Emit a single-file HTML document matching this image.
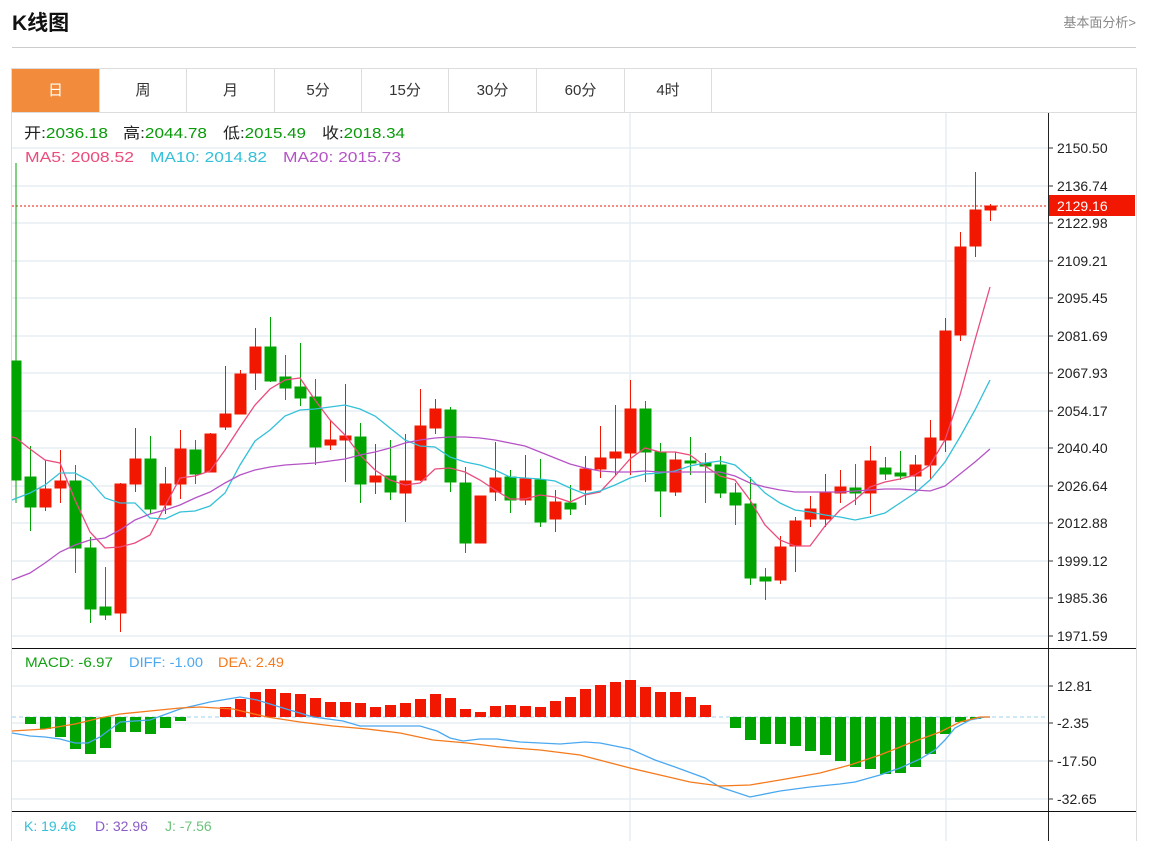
<!DOCTYPE html>
<html style="width:1151px;height:841px;overflow:hidden"><head><meta charset="utf-8"><style>
html,body{margin:0;width:1151px;height:841px;overflow:hidden}
body{background:#fff;font-family:"Liberation Sans","Noto Sans CJK SC",sans-serif;position:relative}
.t{position:absolute;left:12px;top:7px;font-size:21px;font-weight:bold;color:#111}
.r{position:absolute;right:15px;top:12px;font-size:13px;color:#888}
.hr{position:absolute;left:12px;width:1124px;top:47px;height:1px;background:#ccc}
.frame{position:absolute;left:11px;top:68px;width:1124px;height:772px;border:1px solid #ddd;border-bottom:none}
.tab{position:absolute;top:69px;height:43px;line-height:43px;text-align:center;font-size:15px;color:#333;border-right:1px solid #ddd;box-sizing:border-box}
.tab.a{background:#f28c3c;color:#fff}
</style></head><body>
<div class="t">K线图</div>
<div class="r">基本面分析&gt;</div>
<div class="hr"></div>
<div class="frame"></div>
<div class="tab a" style="left:12px;width:88px">日</div>
<div class="tab" style="left:100px;width:87px">周</div>
<div class="tab" style="left:187px;width:88px">月</div>
<div class="tab" style="left:275px;width:87px">5分</div>
<div class="tab" style="left:362px;width:87px">15分</div>
<div class="tab" style="left:449px;width:88px">30分</div>
<div class="tab" style="left:537px;width:88px">60分</div>
<div class="tab" style="left:625px;width:87px">4时</div>
<svg width="1151" height="841" style="position:absolute;left:0;top:0" font-family="Liberation Sans, Noto Sans CJK SC, sans-serif">
<line x1="12" y1="112.5" x2="1136" y2="112.5" stroke="#ddd"/>
<g stroke="#e6edf3" stroke-width="1.5">
<line x1="12" y1="148" x2="1048" y2="148"/><line x1="12" y1="186" x2="1048" y2="186"/><line x1="12" y1="223" x2="1048" y2="223"/><line x1="12" y1="261" x2="1048" y2="261"/><line x1="12" y1="298" x2="1048" y2="298"/><line x1="12" y1="336" x2="1048" y2="336"/><line x1="12" y1="373" x2="1048" y2="373"/><line x1="12" y1="411" x2="1048" y2="411"/><line x1="12" y1="448" x2="1048" y2="448"/><line x1="12" y1="486" x2="1048" y2="486"/><line x1="12" y1="523" x2="1048" y2="523"/><line x1="12" y1="561" x2="1048" y2="561"/><line x1="12" y1="598" x2="1048" y2="598"/><line x1="12" y1="636" x2="1048" y2="636"/>
<line x1="12" y1="686" x2="1048" y2="686"/><line x1="12" y1="723" x2="1048" y2="723"/><line x1="12" y1="761" x2="1048" y2="761"/><line x1="12" y1="799" x2="1048" y2="799"/>
<line x1="630" y1="113" x2="630" y2="841"/><line x1="946" y1="113" x2="946" y2="841"/>
</g>
<g font-size="15">
<text x="24" y="138" fill="#222" textLength="84" lengthAdjust="spacingAndGlyphs">开:<tspan fill="#0a9a0a">2036.18</tspan></text>
<text x="123" y="138" fill="#222" textLength="84" lengthAdjust="spacingAndGlyphs">高:<tspan fill="#0a9a0a">2044.78</tspan></text>
<text x="223" y="138" fill="#222" textLength="83" lengthAdjust="spacingAndGlyphs">低:<tspan fill="#0a9a0a">2015.49</tspan></text>
<text x="322" y="138" fill="#222" textLength="83" lengthAdjust="spacingAndGlyphs">收:<tspan fill="#0a9a0a">2018.34</tspan></text>
<text x="25" y="162" fill="#ea4c7c" textLength="109" lengthAdjust="spacingAndGlyphs">MA5: 2008.52</text>
<text x="150" y="162" fill="#33c0d8" textLength="117" lengthAdjust="spacingAndGlyphs">MA10: 2014.82</text>
<text x="283" y="162" fill="#b553c6" textLength="118" lengthAdjust="spacingAndGlyphs">MA20: 2015.73</text>
</g>
<g font-size="14">
<text x="25" y="667" fill="#12a012" textLength="88" lengthAdjust="spacingAndGlyphs">MACD: -6.97</text>
<text x="129" y="667" fill="#4aa8f0" textLength="74" lengthAdjust="spacingAndGlyphs">DIFF: -1.00</text>
<text x="218" y="667" fill="#f57a1c" textLength="66" lengthAdjust="spacingAndGlyphs">DEA: 2.49</text>
<text x="24" y="831" fill="#33c0d8">K: 19.46</text>
<text x="95" y="831" fill="#8b5cc8">D: 32.96</text>
<text x="165" y="831" fill="#6cc27a">J: -7.56</text>
</g>
<line x1="1048.5" y1="113" x2="1048.5" y2="841" stroke="#222"/>
<line x1="12" y1="648.5" x2="1136" y2="648.5" stroke="#111"/>
<line x1="12" y1="811.5" x2="1136" y2="811.5" stroke="#111"/>
<g stroke="#333"><line x1="1048" y1="148" x2="1053" y2="148"/><line x1="1048" y1="186" x2="1053" y2="186"/><line x1="1048" y1="223" x2="1053" y2="223"/><line x1="1048" y1="261" x2="1053" y2="261"/><line x1="1048" y1="298" x2="1053" y2="298"/><line x1="1048" y1="336" x2="1053" y2="336"/><line x1="1048" y1="373" x2="1053" y2="373"/><line x1="1048" y1="411" x2="1053" y2="411"/><line x1="1048" y1="448" x2="1053" y2="448"/><line x1="1048" y1="486" x2="1053" y2="486"/><line x1="1048" y1="523" x2="1053" y2="523"/><line x1="1048" y1="561" x2="1053" y2="561"/><line x1="1048" y1="598" x2="1053" y2="598"/><line x1="1048" y1="636" x2="1053" y2="636"/><line x1="1048" y1="686" x2="1053" y2="686"/><line x1="1048" y1="723" x2="1053" y2="723"/><line x1="1048" y1="761" x2="1053" y2="761"/><line x1="1048" y1="799" x2="1053" y2="799"/></g>
<g font-size="14" fill="#222">
<text x="1057" y="153">2150.50</text><text x="1057" y="191">2136.74</text><text x="1057" y="228">2122.98</text><text x="1057" y="266">2109.21</text><text x="1057" y="303">2095.45</text><text x="1057" y="341">2081.69</text><text x="1057" y="378">2067.93</text><text x="1057" y="416">2054.17</text><text x="1057" y="453">2040.40</text><text x="1057" y="491">2026.64</text><text x="1057" y="528">2012.88</text><text x="1057" y="566">1999.12</text><text x="1057" y="603">1985.36</text><text x="1057" y="641">1971.59</text>
<text x="1057" y="691">12.81</text><text x="1057" y="728">-2.35</text><text x="1057" y="766">-17.50</text><text x="1057" y="804">-32.65</text>
</g>
<line x1="12" y1="206" x2="1048" y2="206" stroke="#f21700" stroke-dasharray="2,2"/>
<rect x="1049" y="195" width="86" height="21" fill="#f21700"/>
<text x="1057" y="211" font-size="14" fill="#fff">2129.16</text>
<line x1="12" y1="717" x2="1048" y2="717" stroke="#9fd2ee" stroke-dasharray="4,3"/>
<g stroke="#00a400" fill="#00a400">
<line x1="16" y1="163" x2="16" y2="503"/><rect x="12" y="361" width="9" height="119"/>
<line x1="30.5" y1="446" x2="30.5" y2="531"/><rect x="25" y="477" width="11" height="30"/>
<line x1="75.5" y1="465" x2="75.5" y2="573"/><rect x="70" y="481" width="11" height="67"/>
<line x1="90.5" y1="537" x2="90.5" y2="623"/><rect x="85" y="548" width="11" height="61"/>
<line x1="105.5" y1="567" x2="105.5" y2="620"/><rect x="100" y="607" width="11" height="8"/>
<line x1="150.5" y1="436" x2="150.5" y2="514"/><rect x="145" y="459" width="11" height="50"/>
<line x1="195.5" y1="440" x2="195.5" y2="484"/><rect x="190" y="450" width="11" height="24"/>
<line x1="270.5" y1="317" x2="270.5" y2="382"/><rect x="265" y="347" width="11" height="34"/>
<line x1="285.5" y1="355" x2="285.5" y2="400"/><rect x="280" y="377" width="11" height="11"/>
<line x1="300.5" y1="343" x2="300.5" y2="406"/><rect x="295" y="387" width="11" height="11"/>
<line x1="315.5" y1="379" x2="315.5" y2="465"/><rect x="310" y="397" width="11" height="50"/>
<line x1="360.5" y1="423" x2="360.5" y2="503"/><rect x="355" y="437" width="11" height="47"/>
<line x1="390.5" y1="440" x2="390.5" y2="500"/><rect x="385" y="476" width="11" height="16"/>
<line x1="450.5" y1="407" x2="450.5" y2="492"/><rect x="445" y="410" width="11" height="72"/>
<line x1="465.5" y1="467" x2="465.5" y2="553"/><rect x="460" y="483" width="11" height="60"/>
<line x1="510.5" y1="470" x2="510.5" y2="513"/><rect x="505" y="477" width="11" height="23"/>
<line x1="540.5" y1="459" x2="540.5" y2="527"/><rect x="535" y="480" width="11" height="42"/>
<line x1="570.5" y1="485" x2="570.5" y2="515"/><rect x="565" y="503" width="11" height="6"/>
<line x1="645.5" y1="401" x2="645.5" y2="482"/><rect x="640" y="409" width="11" height="43"/>
<line x1="660.5" y1="443" x2="660.5" y2="517"/><rect x="655" y="452" width="11" height="39"/>
<line x1="690.5" y1="437" x2="690.5" y2="475"/><rect x="685" y="461" width="11" height="2"/>
<line x1="705.5" y1="453" x2="705.5" y2="503"/><rect x="700" y="463" width="11" height="3"/>
<line x1="720.5" y1="456" x2="720.5" y2="498"/><rect x="715" y="465" width="11" height="28"/>
<line x1="735.5" y1="483" x2="735.5" y2="525"/><rect x="730" y="493" width="11" height="12"/>
<line x1="750.5" y1="477" x2="750.5" y2="585"/><rect x="745" y="504" width="11" height="74"/>
<line x1="765.5" y1="568" x2="765.5" y2="600"/><rect x="760" y="577" width="11" height="4"/>
<line x1="855.5" y1="464" x2="855.5" y2="505"/><rect x="850" y="488" width="11" height="5"/>
<line x1="885.5" y1="457" x2="885.5" y2="480"/><rect x="880" y="468" width="11" height="6"/>
<line x1="900.5" y1="451" x2="900.5" y2="480"/><rect x="895" y="473" width="11" height="3"/>
</g>
<g stroke="#f21700" fill="#f21700">
<line x1="45.5" y1="460" x2="45.5" y2="511"/><rect x="40" y="489" width="11" height="18"/>
<line x1="60.5" y1="450" x2="60.5" y2="503"/><rect x="55" y="481" width="11" height="7"/>
<line x1="120.5" y1="483" x2="120.5" y2="632"/><rect x="115" y="484" width="11" height="129"/>
<line x1="135.5" y1="428" x2="135.5" y2="492"/><rect x="130" y="459" width="11" height="25"/>
<line x1="165.5" y1="467" x2="165.5" y2="514"/><rect x="160" y="484" width="11" height="21"/>
<line x1="180.5" y1="430" x2="180.5" y2="499"/><rect x="175" y="449" width="11" height="35"/>
<line x1="210.5" y1="433" x2="210.5" y2="472"/><rect x="205" y="434" width="11" height="38"/>
<line x1="225.5" y1="366" x2="225.5" y2="430"/><rect x="220" y="414" width="11" height="13"/>
<line x1="240.5" y1="370" x2="240.5" y2="414"/><rect x="235" y="374" width="11" height="40"/>
<line x1="255.5" y1="328" x2="255.5" y2="390"/><rect x="250" y="347" width="11" height="26"/>
<line x1="330.5" y1="420" x2="330.5" y2="450"/><rect x="325" y="440" width="11" height="5"/>
<line x1="345.5" y1="384" x2="345.5" y2="482"/><rect x="340" y="436" width="11" height="4"/>
<line x1="375.5" y1="444" x2="375.5" y2="494"/><rect x="370" y="476" width="11" height="6"/>
<line x1="405.5" y1="434" x2="405.5" y2="522"/><rect x="400" y="481" width="11" height="12"/>
<line x1="420.5" y1="389" x2="420.5" y2="481"/><rect x="415" y="426" width="11" height="54"/>
<line x1="435.5" y1="399" x2="435.5" y2="434"/><rect x="430" y="409" width="11" height="19"/>
<line x1="480.5" y1="496" x2="480.5" y2="543"/><rect x="475" y="496" width="11" height="47"/>
<line x1="495.5" y1="442" x2="495.5" y2="501"/><rect x="490" y="478" width="11" height="14"/>
<line x1="525.5" y1="455" x2="525.5" y2="505"/><rect x="520" y="479" width="11" height="21"/>
<line x1="555.5" y1="490" x2="555.5" y2="532"/><rect x="550" y="502" width="11" height="17"/>
<line x1="585.5" y1="456" x2="585.5" y2="505"/><rect x="580" y="469" width="11" height="21"/>
<line x1="600.5" y1="426" x2="600.5" y2="478"/><rect x="595" y="458" width="11" height="11"/>
<line x1="615.5" y1="405" x2="615.5" y2="475"/><rect x="610" y="452" width="11" height="6"/>
<line x1="630.5" y1="380" x2="630.5" y2="475"/><rect x="625" y="409" width="11" height="44"/>
<line x1="675.5" y1="452" x2="675.5" y2="496"/><rect x="670" y="460" width="11" height="32"/>
<line x1="780.5" y1="536" x2="780.5" y2="584"/><rect x="775" y="547" width="11" height="33"/>
<line x1="795.5" y1="517" x2="795.5" y2="572"/><rect x="790" y="521" width="11" height="25"/>
<line x1="810.5" y1="496" x2="810.5" y2="527"/><rect x="805" y="509" width="11" height="10"/>
<line x1="825.5" y1="474" x2="825.5" y2="527"/><rect x="820" y="493" width="11" height="26"/>
<line x1="840.5" y1="470" x2="840.5" y2="503"/><rect x="835" y="487" width="11" height="6"/>
<line x1="870.5" y1="446" x2="870.5" y2="514"/><rect x="865" y="461" width="11" height="32"/>
<line x1="915.5" y1="455" x2="915.5" y2="491"/><rect x="910" y="465" width="11" height="11"/>
<line x1="930.5" y1="420" x2="930.5" y2="480"/><rect x="925" y="438" width="11" height="27"/>
<line x1="945.5" y1="318" x2="945.5" y2="452"/><rect x="940" y="331" width="11" height="109"/>
<line x1="960.5" y1="232" x2="960.5" y2="341"/><rect x="955" y="247" width="11" height="88"/>
<line x1="975.5" y1="172" x2="975.5" y2="257"/><rect x="970" y="210" width="11" height="36"/>
<line x1="990.5" y1="204" x2="990.5" y2="221"/><rect x="985" y="206" width="11" height="4"/>
</g>
<g fill="none" stroke-width="1.3">
<polyline stroke="#ea4c7c" points="12,437 16,438 30,449 45,460 60,463 75,500 90,532 105,548 120,547 135,543 150,535 165,506 180,478 195,476 210,471 225,450 240,427 255,405 270,389 285,380 300,378 315,400 330,420 345,435 360,455 375,470 390,480 405,485 420,483 435,469 450,468 465,472 480,480 495,490 510,499 525,499 540,495 555,497 570,502 585,495 600,492 615,476 630,459 645,448 660,452 675,452 690,455 705,466 720,476 735,480 750,500 765,525 780,540 795,546 810,546 825,526 840,510 855,500 870,487 885,482 900,479 915,475 930,465 945,440 960,395 975,340 990,287"/>
<polyline stroke="#33c0d8" points="12,500 30,493 45,485 60,473 75,473 90,481 105,498 120,503 135,503 150,518 165,519 180,512 195,511 210,506 225,493 240,465 255,441 270,430 285,416 300,410 315,409 330,407 345,405 360,409 375,416 390,428 405,440 420,446 435,447 450,457 465,462 480,465 495,470 510,477 525,478 540,479 555,481 570,488 585,494 600,491 615,485 630,478 645,474 660,473 675,471 690,466 705,463 720,461 735,465 750,478 765,493 780,503 795,510 810,512 825,515 840,517 855,520 870,517 885,513 900,503 915,493 930,480 945,462 960,437 975,410 990,380"/>
<polyline stroke="#b553c6" points="12,580 30,573 45,563 60,552 75,545 90,540 105,538 120,530 135,520 150,514 165,510 180,505 195,498 210,492 225,483 240,475 255,470 270,467 285,465 300,464 315,463 330,461 345,459 360,455 375,452 390,448 405,443 420,440 435,438 450,437 465,437 480,438 495,440 510,443 525,446 540,452 555,458 570,464 585,468 600,471 615,472 630,472 645,471 660,472 675,472 690,472 705,472 720,472 735,476 750,483 765,487 780,490 795,492 810,492 825,492 840,492 855,491 870,490 885,489 900,489 915,490 930,491 945,486 960,474 975,462 990,449"/>
</g>
<g fill="#f21700">
<rect x="220" y="707" width="11" height="10"/><rect x="235" y="699" width="11" height="18"/><rect x="250" y="692" width="11" height="25"/><rect x="265" y="689" width="11" height="28"/><rect x="280" y="693" width="11" height="24"/><rect x="295" y="694" width="11" height="23"/><rect x="310" y="698" width="11" height="19"/><rect x="325" y="702" width="11" height="15"/><rect x="340" y="702" width="11" height="15"/><rect x="355" y="703" width="11" height="14"/><rect x="370" y="707" width="11" height="10"/><rect x="385" y="705" width="11" height="12"/><rect x="400" y="703" width="11" height="14"/><rect x="415" y="699" width="11" height="18"/><rect x="430" y="694" width="11" height="23"/><rect x="445" y="698" width="11" height="19"/><rect x="460" y="709" width="11" height="8"/><rect x="475" y="712" width="11" height="5"/><rect x="490" y="706" width="11" height="11"/><rect x="505" y="705" width="11" height="12"/><rect x="520" y="706" width="11" height="11"/><rect x="535" y="707" width="11" height="10"/><rect x="550" y="701" width="11" height="16"/><rect x="565" y="697" width="11" height="20"/><rect x="580" y="689" width="11" height="28"/><rect x="595" y="685" width="11" height="32"/><rect x="610" y="682" width="11" height="35"/><rect x="625" y="680" width="11" height="37"/><rect x="640" y="687" width="11" height="30"/><rect x="655" y="692" width="11" height="25"/><rect x="670" y="692" width="11" height="25"/><rect x="685" y="697" width="11" height="20"/><rect x="700" y="705" width="11" height="12"/>
</g>
<g fill="#00a400">
<rect x="25" y="717" width="11" height="7"/><rect x="40" y="717" width="11" height="12"/><rect x="55" y="717" width="11" height="20"/><rect x="70" y="717" width="11" height="32"/><rect x="85" y="717" width="11" height="37"/><rect x="100" y="717" width="11" height="31"/><rect x="115" y="717" width="11" height="15"/><rect x="130" y="717" width="11" height="15"/><rect x="145" y="717" width="11" height="17"/><rect x="160" y="717" width="11" height="11"/><rect x="175" y="717" width="11" height="4"/>
<rect x="730" y="717" width="11" height="11"/><rect x="745" y="717" width="11" height="23"/><rect x="760" y="717" width="11" height="27"/><rect x="775" y="717" width="11" height="27"/><rect x="790" y="717" width="11" height="29"/><rect x="805" y="717" width="11" height="34"/><rect x="820" y="717" width="11" height="38"/><rect x="835" y="717" width="11" height="44"/><rect x="850" y="717" width="11" height="50"/><rect x="865" y="717" width="11" height="52"/><rect x="880" y="717" width="11" height="57"/><rect x="895" y="717" width="11" height="56"/><rect x="910" y="717" width="11" height="50"/><rect x="925" y="717" width="11" height="37"/><rect x="940" y="717" width="11" height="17"/><rect x="955" y="717" width="11" height="5"/><rect x="970" y="717" width="11" height="2"/>
</g>
<g fill="none" stroke-width="1.3">
<polyline stroke="#4aa8f0" points="12,733 30,736 45,737 60,739 75,743 88,743 100,737 120,722 150,720 180,709 210,702 240,697 257,700 283,708 313,717 343,721 360,726 420,726 437,731 450,738 463,741 480,739 497,739 520,742 540,743 560,744 585,742 600,743 630,749 655,760 675,767 705,778 720,787 750,797 780,791 810,787 840,784 855,782 880,775 900,768 920,759 935,750 945,740 955,728 970,720 985,717 990,717"/>
<polyline stroke="#f57a1c" points="12,731 45,729 75,724 100,718 120,714 150,711 180,708 200,707 233,709 267,717 300,722 333,726 367,729 400,733 433,740 467,743 500,747 540,750 580,755 630,768 660,775 690,782 720,786 750,785 780,780 820,773 850,765 880,755 910,743 940,732 960,722 980,717 990,717"/>
</g>
</svg>
</body></html>
